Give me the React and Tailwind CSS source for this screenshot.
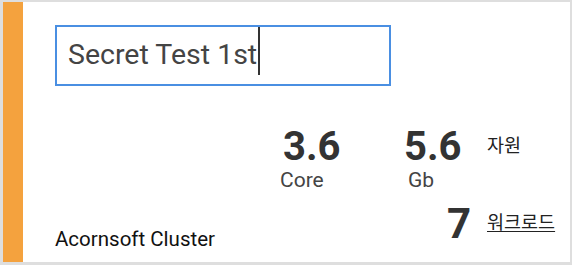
import React from 'react';

const Stat = ({ value, unit, valueClass = '', unitClass = '' }) => (
    <div className="flex flex-col">
        <span className={`text-[40px] leading-none font-bold text-[#333] ${valueClass}`}>{value}</span>
        <span className={`mt-[3px] text-[21px] leading-none text-[#444] ${unitClass}`}>{unit}</span>
    </div>
);

const App = () => {
    return (
        <div className="w-[575px] h-[267px] bg-white font-['Roboto','Noto_Sans_CJK_KR',sans-serif]">
            <div className="flex w-[572px] h-[265px] bg-white border-[#dedede] border-t-2 border-r-2 border-l-[3px] border-b-[3px]">
                <div className="w-[20px] h-full bg-[#f4a23e]" />
                <div className="flex flex-col flex-1 pl-[32px] pt-[23px]">
                    <div className="flex items-center w-[336px] h-[61px] border-2 border-[#4a8fe2] pl-[11px]">
                        <span className="text-[28.5px] leading-none text-[#444]">Secret Test 1st</span>
                        <span className="self-start ml-[1px] w-[2px] h-[48px] bg-[#333]" />
                    </div>
                    <div className="flex mt-[41px]">
                        <div className="w-[225px]">
                            <div className="mt-[102px] text-[20.5px] leading-none text-[#111]">Acornsoft Cluster</div>
                        </div>
                        <div className="grid grid-cols-[124px_83px_auto]">
                            <Stat value="3.6" unit="Core" valueClass="ml-[3px]" />
                            <Stat value="5.6" unit="Gb" unitClass="ml-[4px]" />
                            <span className="mt-[10px] text-[18.5px] leading-none text-[#222]">자원</span>
                            <span />
                            <span className="mt-[8px] pr-[16px] text-right text-[42px] leading-none font-bold text-[#333]">7</span>
                            <a className="mt-[19px] text-[18.5px] leading-none text-[#222] underline underline-offset-2 cursor-pointer">워크로드</a>
                        </div>
                    </div>
                </div>
            </div>
        </div>
    );
};
export default App;
